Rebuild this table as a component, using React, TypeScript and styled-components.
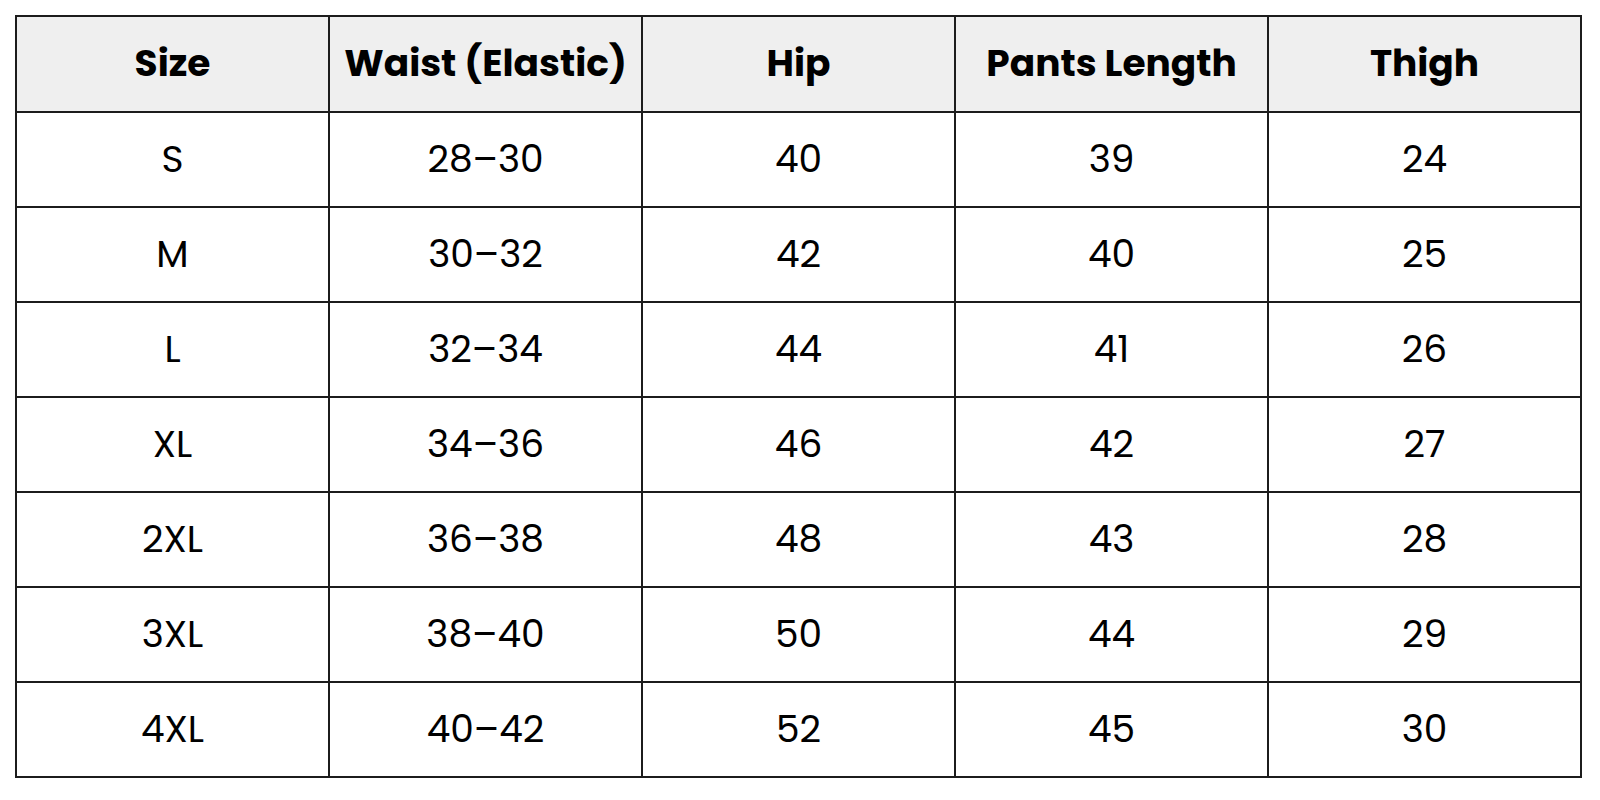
import React from 'react';
import styled, { createGlobalStyle } from 'styled-components';

const GlobalStyle = createGlobalStyle`
	html, body {
		margin: 0;
		padding: 0;
		background: #fff;
	}
	body {
		font-family: Poppins, Inter, "Liberation Sans", sans-serif;
		color: #000;
	}
`;

export const Page = styled.div`
	padding: 15px 18px 0 15px;
`;

export const Table = styled.table`
	width: 1567px;
	border-collapse: collapse;
	table-layout: fixed;
	border: 2px solid #1c1c1c;
`;

export const HeadCell = styled.th`
	height: 92px;
	padding: 0 0 2px;
	background: #efefef;
	border: 2px solid #1c1c1c;
	font-size: 37.5px;
	font-weight: 700;
	text-align: center;
	vertical-align: middle;
`;

export const Cell = styled.td`
	height: 91px;
	padding: 0 0 2px;
	border: 2px solid #1c1c1c;
	font-size: 37.5px;
	font-weight: 400;
	text-align: center;
	vertical-align: middle;
`;

interface SizeRow {
	size: string;
	waist: string;
	hip: number;
	length: number;
	thigh: number;
}

const columns = ['Size', 'Waist (Elastic)', 'Hip', 'Pants Length', 'Thigh'];

const rows: SizeRow[] = [
	{ size: 'S', waist: '28–30', hip: 40, length: 39, thigh: 24 },
	{ size: 'M', waist: '30–32', hip: 42, length: 40, thigh: 25 },
	{ size: 'L', waist: '32–34', hip: 44, length: 41, thigh: 26 },
	{ size: 'XL', waist: '34–36', hip: 46, length: 42, thigh: 27 },
	{ size: '2XL', waist: '36–38', hip: 48, length: 43, thigh: 28 },
	{ size: '3XL', waist: '38–40', hip: 50, length: 44, thigh: 29 },
	{ size: '4XL', waist: '40–42', hip: 52, length: 45, thigh: 30 },
];

const App: React.FC = () => {
	return (
		<>
			<GlobalStyle />
			<Page>
				<Table>
					<thead>
						<tr>
							{ columns.map(col => <HeadCell key={ col }>{ col }</HeadCell>) }
						</tr>
					</thead>
					<tbody>
						{ rows.map(row => (
							<tr key={ row.size }>
								<Cell>{ row.size }</Cell>
								<Cell>{ row.waist }</Cell>
								<Cell>{ row.hip }</Cell>
								<Cell>{ row.length }</Cell>
								<Cell>{ row.thigh }</Cell>
							</tr>
						)) }
					</tbody>
				</Table>
			</Page>
		</>
	);
};

export default App;
